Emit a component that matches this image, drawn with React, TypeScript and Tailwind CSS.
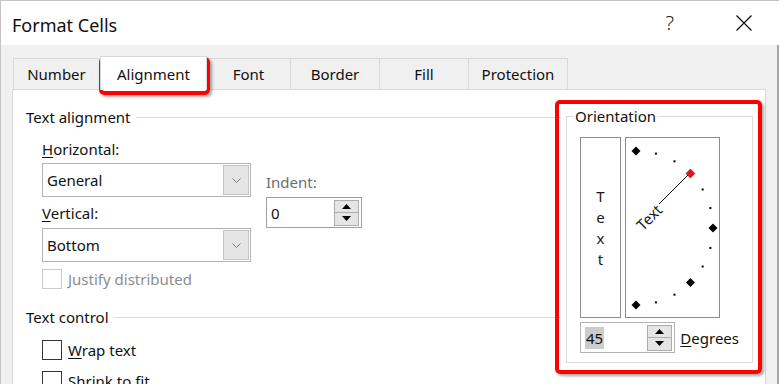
import React from 'react'

const tabs = [
  { label: 'Number', w: 'w-[87px]' },
  { label: 'Alignment', w: 'w-[107px]', active: true },
  { label: 'Font', w: 'w-[85px]' },
  { label: 'Border', w: 'w-[90px]' },
  { label: 'Fill', w: 'w-[90px]' },
  { label: 'Protection', w: 'w-[100px]' },
]

const SpinButtons = () => (
  <div className="flex h-[26px] w-[25px] flex-col border border-[#adadad] bg-[#e5e5e5]">
    <div className="flex flex-1 items-center justify-center border-b border-[#adadad]">
      <svg width="9" height="5" viewBox="0 0 9 5">
        <path d="M0 5 L4.5 0 L9 5Z" fill="#000" />
      </svg>
    </div>
    <div className="flex flex-1 items-center justify-center">
      <svg width="9" height="5" viewBox="0 0 9 5">
        <path d="M0 0 L9 0 L4.5 5Z" fill="#000" />
      </svg>
    </div>
  </div>
)

const Select = ({ value }: { value: string }) => (
  <div className="flex h-[34px] w-[209px] items-center justify-between border border-[#b4b4b4] bg-white pl-[4px] pr-[1px]">
    <span>{value}</span>
    <div className="flex h-[30px] w-[26px] items-center justify-center border border-[#c4c4c4] bg-[#e5e5e5]">
      <svg width="9" height="5" viewBox="0 0 9 5">
        <path d="M0.5 0.5 L4.5 4.5 L8.5 0.5" fill="none" stroke="#7a7a7a" strokeWidth="1" />
      </svg>
    </div>
  </div>
)

const Checkbox = ({ label, disabled }: { label: React.ReactNode; disabled?: boolean }) => (
  <div className="flex items-center gap-[6px]">
    <div className={`h-[20px] w-[20px] border bg-white ${disabled ? 'border-[#cccccc]' : 'border-[#333333]'}`} />
    <span className={disabled ? 'text-[#8d8d8d]' : ''}>{label}</span>
  </div>
)

const GroupHeader = ({ title }: { title: string }) => (
  <div className="flex h-[20px] items-center">
    <span>{title}</span>
    <div className="ml-[5px] h-px flex-1 bg-[#dcdcdc]" />
  </div>
)

const Dial = () => {
  const cx = 10
  const cy = 90
  const r = 77
  const pts = [-90, -75, -60, -45, -30, -15, 0, 15, 30, 45, 60, 75, 90]
  return (
    <svg width="93" height="179" viewBox="0 0 93 179" className="block">
      {pts.map((a) => {
        const rad = (a * Math.PI) / 180
        const x = cx + r * Math.cos(rad)
        const y = cy + r * Math.sin(rad)
        if (a % 45 === 0) {
          const red = a === -45
          return (
            <path
              key={a}
              d={`M${x} ${y - 4.5} L${x + 4.5} ${y} L${x} ${y + 4.5} L${x - 4.5} ${y}Z`}
              fill={red ? '#e81123' : '#000'}
              stroke={red ? '#7a0000' : 'none'}
              strokeWidth="0.5"
            />
          )
        }
        return <rect key={a} x={x - 1} y={y - 1} width="2" height="2" fill="#000" />
      })}
      <line x1="33" y1="66" x2="62" y2="37" stroke="#000" strokeWidth="1" />
      <text
        x="23"
        y="79"
        transform="rotate(-45 23 79)"
        textAnchor="middle"
        dominantBaseline="central"
        fontSize="15"
        fontFamily="Noto Sans, sans-serif"
        fill="#1a1a1a"
      >
        Text
      </text>
    </svg>
  )
}

export default function App() {
  return (
    <div className="relative h-[384px] w-[779px] overflow-hidden border-l border-t border-[#c4c4c4] bg-[#f0f0f0] font-['Noto_Sans',sans-serif] text-[15px] leading-[20px] text-[#111]">
      {/* title bar */}
      <div className="flex h-[44px] items-center justify-between bg-white pl-[11px]">
        <span className="mt-[3px] text-[18px]">Format Cells</span>
        <div className="flex items-center">
          <span className="text-[20px] font-light text-[#222]">?</span>
          <svg width="16" height="16" viewBox="0 0 16 16" className="ml-[62px] mr-[27px]">
            <path d="M0.5 0.5 L15.5 15.5 M15.5 0.5 L0.5 15.5" stroke="#000" strokeWidth="1.1" />
          </svg>
        </div>
      </div>

      {/* body */}
      <div className="h-[340px] border-r-2 border-[#a8a8a8] pl-[11px] pt-[13px]">
        {/* tabs */}
        <div className="flex h-[31px] items-end pl-[1px]">
          {tabs.map((t) =>
            t.active ? (
              <div
                key={t.label}
                className={`${t.w} relative z-10 -mb-px flex h-[34px] items-center justify-center border border-b-0 border-[#d9d9d9] bg-white`}
              >
                {t.label}
              </div>
            ) : (
              <div
                key={t.label}
                className={`${t.w} -ml-px flex h-[31px] items-center justify-center border border-b-0 border-[#d9d9d9] first:ml-0`}
              >
                {t.label}
              </div>
            )
          )}
        </div>

        {/* panel */}
        <div className="flex h-[300px] w-[754px] border border-[#d9d9d9] bg-white">
          {/* left column */}
          <div className="flex w-[553px] flex-col pl-[13px] pr-[6px] pt-[17px]">
            <GroupHeader title="Text alignment" />
            <div className="mt-[12px] flex items-start pl-[16px]">
              <div className="flex flex-col">
                <span>
                  <span className="underline underline-offset-2">H</span>orizontal:
                </span>
                <div className="mt-[4px]">
                  <Select value="General" />
                </div>
                <span className="mt-[6px]">
                  <span className="underline underline-offset-2">V</span>ertical:
                </span>
                <div className="mt-[5px]">
                  <Select value="Bottom" />
                </div>
                <div className="mt-[7px]">
                  <Checkbox label="Justify distributed" disabled />
                </div>
              </div>
              <div className="ml-[15px] flex flex-col pt-[33px]">
                <span className="text-[#6d6d6d]">Indent:</span>
                <div className="mt-[5px] flex h-[31px] w-[96px] items-center justify-between border border-[#a0a0a0] pl-[4px] pr-[2px]">
                  <span>0</span>
                  <SpinButtons />
                </div>
              </div>
            </div>
            <div className="mt-[18px]">
              <GroupHeader title="Text control" />
            </div>
            <div className="mt-[13px] flex flex-col gap-[11px] pl-[16px]">
              <Checkbox
                label={
                  <>
                    <span className="underline underline-offset-2">W</span>rap text
                  </>
                }
              />
              <Checkbox label="Shrink to fit" />
            </div>
          </div>

          {/* orientation */}
          <div className="pt-[26px]">
            <div className="relative w-[187px] border border-[#dcdcdc] px-[13px] pb-[9px] pt-[20px]">
              <span className="absolute left-[7px] top-[-11px] bg-white px-[1px]">Orientation</span>
              <div className="flex gap-[4px]">
                <div className="flex h-[181px] w-[41px] flex-col items-center justify-center border border-[#8c8c8c] leading-[21px] text-[#1a1a1a]">
                  <span>T</span>
                  <span>e</span>
                  <span>x</span>
                  <span>t</span>
                </div>
                <div className="h-[181px] w-[95px] border border-[#8c8c8c]">
                  <Dial />
                </div>
              </div>
              <div className="mt-[4px] flex items-center">
                <div className="flex h-[31px] w-[97px] items-center justify-between border border-[#b4b4b4] pl-[4px] pr-[2px]">
                  <span className="bg-[#cccccc] px-px leading-[22px]">45</span>
                  <SpinButtons />
                </div>
                <span className="ml-[5px]">
                  <span className="underline underline-offset-2">D</span>egrees
                </span>
              </div>
            </div>
          </div>
        </div>
      </div>

      {/* highlight boxes */}
      <div className="absolute left-[98px] top-[56px] h-[38px] w-[111px] rounded-[5px] border-4 border-[#ff0000] shadow-[2px_2px_3px_rgba(0,0,0,0.35)]" />
      <div className="absolute left-[554px] top-[99px] h-[274px] w-[207px] rounded-[5px] border-4 border-[#ff0000] shadow-[2px_2px_3px_rgba(0,0,0,0.35)]" />
    </div>
  )
}
